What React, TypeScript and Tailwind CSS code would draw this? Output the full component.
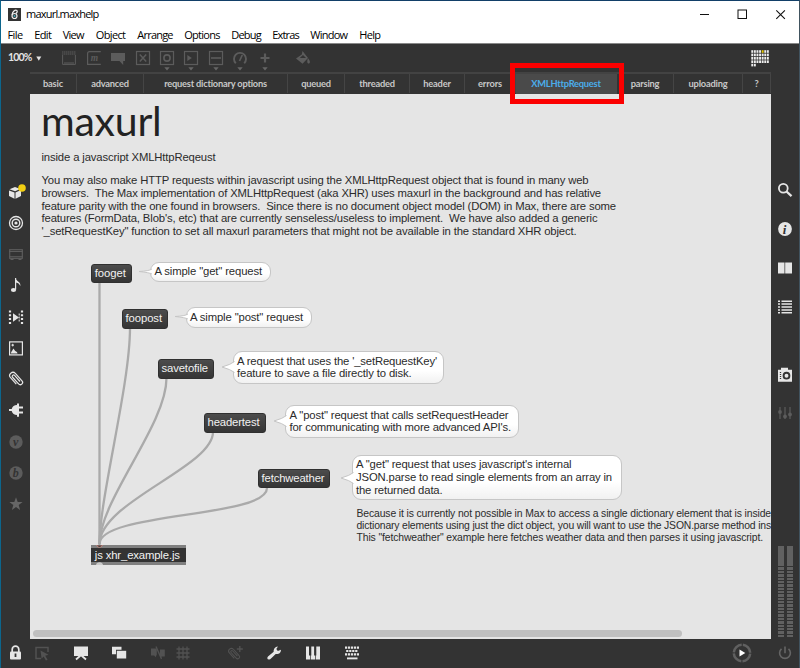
import React, { useLayoutEffect, useRef } from "react";

const dim = "#5c5c5c";
const lit = "#e6e6e6";

/* A single line of text whose tracking is adjusted to fill a known width. */
function Fit({ w, children, className = "" }: { w: number; children: string; className?: string }) {
  const ref = useRef<HTMLSpanElement>(null);
  useLayoutEffect(() => {
    const el = ref.current;
    if (!el) return;
    el.style.letterSpacing = "0px";
    const natural = el.getBoundingClientRect().width;
    el.style.letterSpacing = `${(w - natural) / children.length}px`;
  }, [w, children]);
  return (
    <span ref={ref} className={`inline-block whitespace-pre ${className}`}>
      {children}
    </span>
  );
}

function Svg({ w = 16, h = 16, children, className = "" }: { w?: number; h?: number; children: React.ReactNode; className?: string }) {
  return (
    <svg width={w} height={h} viewBox={`0 0 ${w} ${h}`} fill="none" className={`shrink-0 overflow-visible ${className}`}>
      {children}
    </svg>
  );
}

const menus: [string, number, number][] = [
  ["File", 15, 26.7],
  ["Edit", 17, 28.6],
  ["View", 21, 33],
  ["Object", 29.5, 41.5],
  ["Arrange", 35.5, 47],
  ["Options", 35.5, 47],
  ["Debug", 29.5, 41],
  ["Extras", 26.5, 38],
  ["Window", 37, 49],
  ["Help", 21, 30],
];

const tabs: [string, number, string][] = [
  ["basic", 20, "w-[47px]"],
  ["advanced", 37.5, "w-[67px]"],
  ["request dictionary options", 103, "w-[144px]"],
  ["queued", 29.5, "w-[57px]"],
  ["threaded", 35.5, "w-[65px]"],
  ["header", 27.5, "w-[55px]"],
  ["errors", 24, "w-[51px]"],
  ["XMLHttpRequest", 69, "w-[101px]"],
  ["parsing", 28.5, "w-[57px]"],
  ["uploading", 39, "w-[69px]"],
  ["?", 4, "w-[28px]"],
];

function TitleBar() {
  return (
    <div className="flex h-[26px] items-center bg-white pl-[7px] text-black">
      <Svg w={13} h={13}>
        <rect width="13" height="13" fill="#333" />
        <path d="M9 2.600C7 1.400 4.500 3.500 4 7M8.800 2.500c1 .9.2 2.300-.9 3" stroke="#eee" strokeWidth="1.200" />
        <circle cx="6.500" cy="8" r="2.500" stroke="#eee" strokeWidth="1.200" />
        <circle cx="6.500" cy="8" r="1" fill="#4ab" />
      </Svg>
      <div className="ml-[5px] text-[11px] leading-[14px]"><Fit w={72.5}>maxurl.maxhelp</Fit></div>
      <div className="ml-auto flex items-center gap-[27px] pr-[13.500px]">
        <Svg w={11} h={11}><path d="M1 5.5h9" stroke="#111" /></Svg>
        <Svg w={11} h={11}><rect x="1" y="1" width="8.500" height="8.500" stroke="#111" /></Svg>
        <Svg w={11} h={11}><path d="M1.300 1.300l8.600 8.600M9.900 1.300l-8.600 8.600" stroke="#111" strokeWidth="1.100" /></Svg>
      </div>
    </div>
  );
}

function Caret() {
  return <Svg w={6} h={4}><path d="M.3.3h5.400L3 3.500z" fill="#666" /></Svg>;
}

function Tool({ children, caret = false }: { children: React.ReactNode; caret?: boolean }) {
  return (
    <div className="flex h-[29px] w-[24.400px] shrink-0 flex-col items-center pt-[6px]">
      {children}
      {caret && <div className="mt-[1px]"><Caret /></div>}
    </div>
  );
}

/* Paper clip leaning to the left; `color` sets its wire. */
function Clip({ color, scale = 1 }: { color: string; scale?: number }) {
  return (
    <g transform={`translate(8 8) scale(${scale}) rotate(-42)`} stroke={color} strokeWidth="1.200" fill="none">
      <path d="M-3.200 4V-4.600a3.200 3.200 0 0 1 6.400 0V5.400a2.300 2.300 0 0 1-4.600 0V-3.600a1.300 1.300 0 0 1 2.700 0V4.500" />
    </g>
  );
}

function Toolbar() {
  const frame = <rect x="1.500" y="1.500" width="13" height="13" stroke={dim} strokeWidth="1.200" />;
  return (
    <div className="flex h-[28px] items-start">
      <div className="flex h-[28px] w-[56.300px] shrink-0 items-center pl-[7px] font-['Lato'] text-[10.500px] font-bold text-[#e4e4e4]">
        <Fit w={23.5}>100%</Fit>
        <Svg w={6} h={5} className="ml-[4px]"><path d="M.3.4h5L2.800 4.800z" fill="#e4e4e4" /></Svg>
      </div>
      <Tool>
        <Svg><path d="M1.600 5v9.400h12.800V5" stroke={dim} /><path d="M1 2h14M1 4h14" stroke={dim} strokeDasharray="1.5 .5" /><path d="M3 13h10" stroke={dim} /></Svg>
      </Tool>
      <Tool>
        <Svg>
          <path d="M14.800 1.600H3.600Q1.600 1.600 1.600 3.600V14.400h13.200" stroke={dim} strokeWidth="1.200" />
          <text x="4.800" y="10.500" fontSize="9.500" fontStyle="italic" fontWeight="bold" fontFamily="Liberation Serif, serif" fill={dim}>m</text>
        </Svg>
      </Tool>
      <Tool><Svg><path d="M1 3h14v8h-1.800v4L9.500 11H1z" fill={dim} /></Svg></Tool>
      <Tool><Svg>{frame}<path d="M4.800 4.600l6.400 6.800M11.200 4.600l-6.400 6.800" stroke={dim} strokeWidth="1.500" /></Svg></Tool>
      <Tool caret><Svg>{frame}<circle cx="8" cy="8" r="3.100" stroke={dim} strokeWidth="1.600" /></Svg></Tool>
      <Tool caret><Svg>{frame}<path d="M4.300 5L8.800 8l-4.500 3z" fill={dim} /></Svg></Tool>
      <Tool caret><Svg>{frame}<path d="M3 8h10" stroke={dim} strokeWidth="1.600" /></Svg></Tool>
      <Tool caret><Svg><path d="M3.800 13.200a6 6 0 1 1 8.400 0" stroke={dim} strokeWidth="1.900" /><path d="M7.500 11l2.800-6" stroke={dim} strokeWidth="1.700" /></Svg></Tool>
      <Tool caret><Svg><path d="M8 3.500v9M3.500 8h9" stroke={dim} strokeWidth="2.200" /></Svg></Tool>
      <div className="ml-[14px]">
        <Tool><Svg><path d="M7.500 1L6.800 4.500 1 8.500l6.500 5.200L13 8z" fill={dim} /><path d="M4.800 8l3.200-3 3 3z" fill="#333" /><path d="M13 8.200c3 3.300 1.800 5.300.6 5.300s-2-2-.6-5.300z" fill={dim} /></Svg></Tool>
      </div>
      <div className="ml-auto mr-[29.500px] pt-[6px]">
        <Svg w={19} h={17}>
          {[0, 1, 2, 3, 4].map((r) =>
            [0, 1, 2, 3, 4, 5, 6].slice(0, r === 4 ? 2 : 7).map((c) => (
              <rect key={`${r}-${c}`} x={0.3 + c * 2.6} y={0.2 + r * 3.4} width="1.900" height="2.600" fill={r === 0 && c === 4 ? "#e8c900" : "#eee"} />
            ))
          )}
        </Svg>
      </div>
    </div>
  );
}

function Tabs() {
  return (
    <div className="ml-[29px] flex h-[22px] w-[741px] border-t-2 border-[#434343] pb-[1px] font-['Lato'] text-[9.300px] font-bold text-[#c8c8c8]">
      {tabs.map(([label, w, cls]) => (
        <div key={label} className={`flex items-center justify-center border-r ${cls} ${label === "XMLHttpRequest" ? "-mb-[1px] border-transparent bg-[#4a4a4a] pb-[1px] text-[#4badea]" : "border-[#454545]"}`}>
          <Fit w={w}>{label}</Fit>
        </div>
      ))}
    </div>
  );
}

function LeftBar() {
  const icons = [
    <Svg><path d="M1 6.500l5.500 2v6.300L1 12z M7.500 8.500l5.500-2.400V12l-5.500 2.800z M1.500 5.200L7 3l5.300 2-5.200 2.300z" fill={lit} /><circle cx="14" cy="4" r="3.800" fill="#f2cf13" /></Svg>,
    <Svg><circle cx="8" cy="8" r="6.500" stroke={lit} strokeWidth="1.300" /><circle cx="8" cy="8" r="3.800" stroke={lit} strokeWidth="1.400" /><circle cx="8" cy="8" r="1.600" fill={lit} /></Svg>,
    <Svg><rect x="1.700" y="3.700" width="12.600" height="8.600" stroke={dim} strokeWidth="1.200" /><path d="M1 5.500h14M1 10.700h14M2.500 13.500h3M10.500 13.500h3" stroke={dim} /></Svg>,
    <Svg><path d="M7.600 1v11.500" stroke={lit} strokeWidth="1.200" /><ellipse cx="5.500" cy="13" rx="2.600" ry="2" fill={lit} /><path d="M7.300 1c1 3.500 5.900 3.500 5 8.200C11.500 6.200 9 5.700 7.300 5.500z" fill={lit} /></Svg>,
    <Svg><path d="M2 1.500v14M14 1.500v14" stroke={lit} strokeWidth="2.200" strokeDasharray="2 1.800" /><path d="M5 4.300v8.400l6-4.200z" fill={lit} /><path d="M11.200 4.500v8" stroke={lit} strokeDasharray="2 1" /></Svg>,
    <Svg><rect x="1.600" y="1.900" width="12.800" height="13" stroke={lit} strokeWidth="1.200" /><path d="M3 13.500c0-2 1-2 1.500-3.500l1-1.500 1 1.500c.5 1.500 3 1.500 3 3.500z" fill={lit} /><path d="M4.700 3.800v2.600M3.400 5.100H6" stroke={lit} /></Svg>,
    <Svg><Clip color={lit} /></Svg>,
    <Svg><path d="M1 7h2.700C4.400 4.500 6.300 3 9 3V1.500h2V4.600h4v2h-4v3h4v2h-4v3.100H9V13c-2.700 0-4.600-1.400-5.300-4H1z" fill={lit} /></Svg>,
    <Svg><circle cx="8" cy="8" r="6.700" fill={dim} /><text x="5" y="11.500" fontSize="12" fontStyle="italic" fontWeight="bold" fontFamily="Liberation Serif, serif" fill="#333">v</text></Svg>,
    <Svg><circle cx="8" cy="8" r="6.700" fill={dim} /><text x="4.800" y="12" fontSize="12" fontStyle="italic" fontWeight="bold" fontFamily="Liberation Serif, serif" fill="#333">b</text></Svg>,
    <Svg><path d="M8 1.300l1.700 4.600 4.900.2-3.900 3 1.400 4.800L8 11.100l-4.100 2.800 1.400-4.800-3.900-3 4.900-.2z" fill="#666" /></Svg>,
  ];
  return (
    <div className="flex w-[29px] shrink-0 flex-col items-center pt-[82px]">
      {icons.map((icon, i) => <div key={i} className="flex h-[31.25px] items-center">{icon}</div>)}
    </div>
  );
}

function RightBar() {
  const top = [
    <Svg><circle cx="6.300" cy="6.300" r="4.400" stroke={lit} strokeWidth="1.800" /><path d="M9.500 9.500l5 4.700" stroke={lit} strokeWidth="2.300" /></Svg>,
    <Svg><circle cx="8" cy="8" r="6.900" fill={lit} /><text x="5.700" y="12.500" fontSize="13" fontStyle="italic" fontWeight="bold" fontFamily="Liberation Serif, serif" fill="#333">i</text></Svg>,
    <Svg><path d="M1 2.500h6.500v11H1zM8.200 2.500H15v11H8.200z" fill={lit} /></Svg>,
    <Svg><path d="M1 2.200h2M4.500 2.200H15M1 5.100h2M4.500 5.100H15M1 8h2M4.500 8H15M1 10.900h2M4.500 10.900H15M1 13.800h2M4.500 13.800H15" stroke={lit} strokeWidth="1.500" /></Svg>,
  ];
  return (
    <div className="flex w-[28px] shrink-0 flex-col items-center pt-[76.500px]">
      {top.map((icon, i) => <div key={i} className="flex h-[39px] items-center">{icon}</div>)}
      <div className="mt-[29px] flex h-[38.500px] items-center">
        <Svg><path d="M4 .8h7v2h4v12H1v-12h3z" fill={lit} /><circle cx="9.500" cy="8.700" r="2.900" stroke="#333" strokeWidth="1.900" /><path d="M3.500 5v8" stroke="#333" strokeWidth="1.300" strokeDasharray="1 1" /></Svg>
      </div>
      <div className="flex h-[38.500px] items-center">
        <Svg><path d="M3 2v12M8 2v12M13 2v12" stroke={dim} strokeWidth="1.200" /><circle cx="3" cy="7" r="1.900" fill={dim} /><circle cx="8" cy="11.500" r="1.900" fill={dim} /><circle cx="13" cy="9.500" r="1.900" fill={dim} /></Svg>
      </div>
      <div className="mb-[2px] mt-auto flex gap-[3px]">
        {[0, 1].map((i) => (
          <div key={i} className="w-[6px]">
            <div className="h-[20px] bg-[#616161]" />
            {Array.from({ length: 21 }, (_, k) => <div key={k} className="mt-[1px] h-[2.37px] bg-[#616161]" />)}
          </div>
        ))}
      </div>
    </div>
  );
}

function BottomBar() {
  const dark = "#525252";
  return (
    <div className="flex h-[28px] shrink-0 items-center pl-[6px]">
      <Svg className="mr-[10.500px]"><rect x="3" y="6.600" width="11" height="7.900" rx="1" fill={lit} /><path d="M5.200 7V4.400a3.300 3.300 0 0 1 6.600 0V7" stroke={lit} strokeWidth="1.700" /><path d="M8.500 8.500v3.500" stroke="#333" strokeWidth="1.800" /></Svg>
      <Svg className="mr-[23px]"><path d="M7 13.500H2v-11h12V7" stroke={dark} strokeWidth="1.500" /><path d="M6.500 5.500l8 4.200-3.300 1 2.400 4-1.700.9-2.300-4-2 2.200z" fill={dark} /></Svg>
      <Svg className="mr-[22.500px]"><path d="M1 1.500h14v9.500H1z" fill={lit} /><path d="M7.500 10.500l-4.500 4M8.500 10.500l4.500 4" stroke={lit} strokeWidth="1.800" /></Svg>
      <Svg className="mr-[23px]"><path d="M1 1.800h9.500v3H5v4.500H1z" fill={lit} /><path d="M5.800 5.800h9.400v7.700H5.800z" fill={lit} /></Svg>
      <Svg className="mr-[8.500px]"><path d="M1 3.500h5.800v6l-1.200 2.700-1.400-1.700H1zM10 4.500h4.800v7h-3.300v1.500L9.800 11z" fill={dark} /><path d="M6 1.500l5.500 12.500" stroke={dark} strokeWidth="1.300" /></Svg>
      <Svg className="mr-[36.500px]"><path d="M4 1.500v13M8 1.500v13M12 1.500v13M1.500 4h13M1.500 8h13M1.500 12h13" stroke={dark} strokeWidth="1.300" /></Svg>
      <Svg className="mr-[22.500px]"><g transform="translate(-1 1)"><Clip color={dark} scale={0.85} /></g><path d="M12.800 1v6M9.800 4h6" stroke={dark} strokeWidth="1.300" /></Svg>
      <Svg className="mr-[23.500px]"><path d="M2.900 14.500c-1.900-.2-2-2.100-.9-3.100l5.700-4.700C7.400 4.300 8.800 1.700 12 1.400L10.300 4l1.500 2 3.100-1.300c.3 3.100-2.600 4.900-5.200 4.200L5 13.600c-.6.700-1.200 1-2.100.9z" fill={lit} /></Svg>
      <Svg className="mr-[23px]"><path d="M1 1.500h3v9h1.200v4H1zM6.300 1.500h2.800v9h1v4H5.900v-4h.4zM11.300 1.500H15v13h-4.200v-4h.5z" fill={lit} /></Svg>
      <Svg><path d="M1 2.600h14M2.200 6h12M1 9.400h14" stroke={lit} strokeWidth="2.100" strokeDasharray="2.200 .8" /><path d="M3 13.400h10.500" stroke={lit} strokeWidth="1.900" /></Svg>
      <div className="ml-auto flex items-center gap-[25px] pr-[6px]">
        <Svg w={20} h={20}><circle cx="10" cy="10" r="8.200" stroke="#606060" strokeWidth="2.500" strokeDasharray="11.680 1.200" strokeDashoffset="-.6" /><path d="M7.500 6.500v7l5.800-3.500z" fill="#fff" /></Svg>
        <Svg><path d="M4.500 3.900a5.400 5.400 0 1 0 7 0M8 1.500v6.800" stroke="#656565" strokeWidth="1.600" /></Svg>
      </div>
    </div>
  );
}

const messages: [string, number, string][] = [
  ["fooget", 31, "left-[61.3px] top-[169.5px] w-[41px]"],
  ["foopost", 36.5, "left-[92px] top-[215px] w-[45.5px]"],
  ["savetofile", 46.5, "left-[128px] top-[265px] w-[56px]"],
  ["headertest", 52, "left-[174px] top-[319px] w-[62px]"],
  ["fetchweather", 63, "left-[228px] top-[374.5px] w-[72px]"],
];

const bubbles: { box: string; small: boolean; lines: [string, number][] }[] = [
  { box: "left-[120px] top-[167.5px] w-[120.5px] h-[20.5px]", small: true, lines: [['A simple "get" request', 107.5]] },
  { box: "left-[155.5px] top-[213px] w-[126px] h-[20.5px]", small: true, lines: [['A simple "post" request', 113]] },
  { box: "left-[202.5px] top-[257px] w-[211.5px] h-[32.5px]", small: false, lines: [["A request that uses the '_setRequestKey'", 200], ["feature to save a file directly to disk.", 174.5]] },
  { box: "left-[255px] top-[311px] w-[234px] h-[32.5px]", small: false, lines: [['A "post" request that calls setRequestHeader', 219], ["for communicating with more advanced API's.", 221.5]] },
  { box: "left-[321.5px] top-[361px] w-[270.5px] h-[45px]", small: false, lines: [["A \"get\" request that uses javascript's internal", 215.5], ["JSON.parse to read single elements from an array in", 256], ["the returned data.", 86.5]] },
];

function Canvas() {
  const para: [string, number][] = [
    ["You may also make HTTP requests within javascript using the XMLHttpRequest object that is found in many web", 547],
    ["browsers.  The Max implementation of XMLHttpRequest (aka XHR) uses maxurl in the background and has relative", 559.5],
    ["feature parity with the one found in browsers.  Since there is no document object model (DOM) in Max, there are some", 574.5],
    ["features (FormData, Blob's, etc) that are currently senseless/useless to implement.  We have also added a generic", 556],
    ["'_setRequestKey\" function to set all maxurl parameters that might not be available in the standard XHR object.", 535],
  ];
  const notes: [string, number][] = [
    ["Because it is currently not possible in Max to access a single dictionary element that is inside", 414.5],
    ["dictionary elements using just the dict object, you will want to use the JSON.parse method ins", 414.5],
    ['This "fetchweather" example here fetches weather data and then parses it using javascript.', 406.5],
  ];
  return (
    <div className="relative h-[545px] w-[741px] shrink-0 overflow-hidden bg-[#e5e5e5] font-['Liberation_Sans',sans-serif] text-[11.3px] leading-[12.67px] text-[#2b2b2b]">
      <div className="absolute left-[11px] top-[2px] font-['Lato'] text-[41px] leading-[49px] text-[#222]"><Fit w={120.5}>maxurl</Fit></div>
      <div className="absolute left-[11.5px] top-[57px]"><Fit w={174}>inside a javascript XMLHttpReqeust</Fit></div>
      <div className="absolute left-[11.5px] top-[80.3px] flex flex-col items-start">
        {para.map(([t, w]) => <Fit key={t} w={w}>{t}</Fit>)}
      </div>

      <svg className="absolute left-0 top-0" width="741" height="545" viewBox="30 94 741 545" fill="none" stroke="#aaa" strokeWidth="2.3">
        <path d="M99.500 283V546" />
        <path d="M130 328C130 385 99.500 498 99.500 544" />
        <path d="M166.500 378C166.500 425 99.500 500 99.500 544" />
        <path d="M213 432C213 467 99.500 502 99.500 544" />
        <path d="M267 488C267 518 99.500 512 99.500 544" />
      </svg>

      {messages.map(([t, w, cls]) => (
        <div key={t} className={`absolute flex h-[19.500px] items-center rounded-[3px] border border-[#303030] bg-gradient-to-b from-[#4c4c4c] to-[#353535] pl-[2.500px] text-[#f2f2f2] ${cls}`}>
          <Fit w={w}>{t}</Fit>
        </div>
      ))}

      {bubbles.map((b) => (
        <div key={b.lines[0][0]} className={`absolute flex flex-col items-start justify-center rounded-[9px] border border-[#c6c6c6] bg-gradient-to-b from-white from-60% to-[#f1f1f1] pl-[3.500px] ${b.box}`}>
          {b.small ? (
            <svg className="absolute -left-[13px] top-1/2 -mt-[4px]" width="14" height="8" fill="none">
              <path d="M14 1Q11 3 1 3.500Q11 4.500 14 6" fill="#fff" stroke="#c6c6c6" />
            </svg>
          ) : (
            <svg className="absolute -left-[13px] top-1/2 -mt-[7px]" width="14" height="14" fill="none">
              <path d="M13.500 1.500Q10 4.500 1 7Q10 9.500 13.500 12.500" fill="#fff" stroke="#c6c6c6" />
            </svg>
          )}
          {b.lines.map(([t, w]) => <Fit key={t} w={w}>{t}</Fit>)}
        </div>
      ))}

      <div className="absolute left-[326.500px] top-[413.500px] flex flex-col items-start text-[10.400px] leading-[12px]">
        {notes.map(([t, w]) => <Fit key={t} w={w}>{t}</Fit>)}
      </div>

      <div className="absolute left-[61.300px] top-[451px] flex h-[19.500px] w-[94.700px] items-center border-y-[3px] border-[#808080] bg-[#333] pl-[3.500px] pt-[1px] text-[#f2f2f2]">
        <Fit w={85}>js xhr_example.js</Fit>
        <svg className="absolute -top-[3px] left-[5px]" width="7" height="3"><path d="M.5 0h6Q5.500 2.500 3.500 2.500T.5 0z" fill="#444" stroke="#d08a80" strokeWidth=".8" /></svg>
        <svg className="absolute -bottom-[3px] left-[5px]" width="7" height="3"><path d="M0 3Q.5.300 3.500.3T7 3z" fill="#ccc" /></svg>
      </div>

      <div className="absolute bottom-[2.500px] left-[3px] h-[7px] w-[648.500px] rounded-full bg-[#c0c0c0]" />
    </div>
  );
}

export default function App() {
  return (
    <div className="relative flex h-[668px] w-[800px] flex-col overflow-hidden border-l border-r border-t border-l-[#0c668d] border-r-[#41535f] border-t-[#123f68] bg-[#333] font-['Open_Sans','Noto_Sans',sans-serif]">
      <TitleBar />
      <div className="flex h-[17px] shrink-0 items-start border-b border-[#888] bg-white pl-[6.500px] text-[11px] leading-[15px] text-black">
        {menus.map(([t, w, step]) => (
          <div key={t} className="shrink-0" style={{ width: step }}><Fit w={w}>{t}</Fit></div>
        ))}
      </div>
      <Toolbar />
      <Tabs />
      <div className="flex h-[545px] shrink-0">
        <LeftBar />
        <Canvas />
        <RightBar />
      </div>
      <BottomBar />
      <div className="absolute left-[509px] top-[62px] h-[41px] w-[114px] border-[5px] border-[#fb0000]" />
    </div>
  );
}
